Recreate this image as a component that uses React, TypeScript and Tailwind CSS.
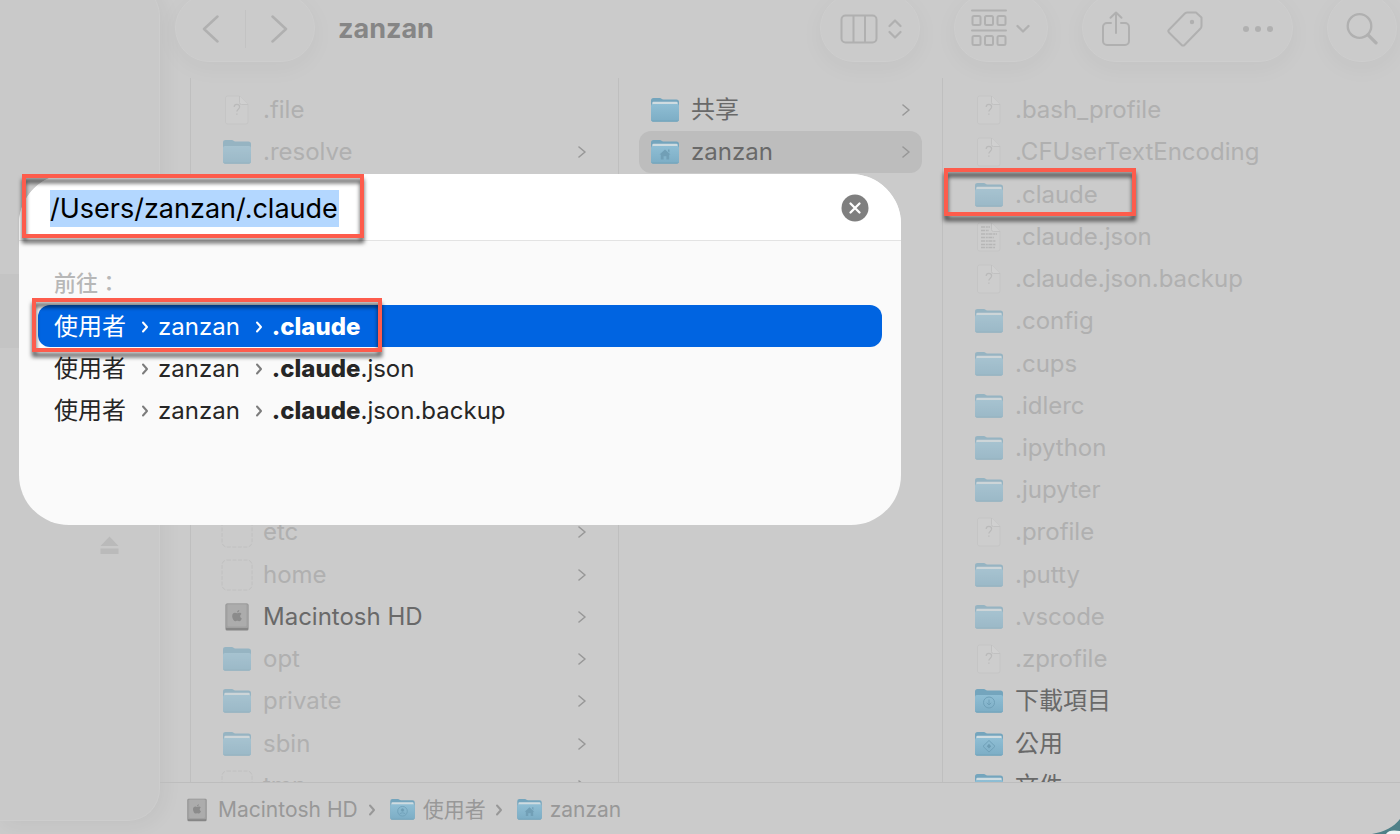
import { useState } from "react";
import clsx from "clsx";

type IconKind =
  | "folder"
  | "empty"
  | "home"
  | "users"
  | "download"
  | "public"
  | "documents"
  | "file"
  | "text"
  | "alias"
  | "disk";

type Entry = {
  name: string;
  icon: IconKind;
  strong?: boolean;
  arrow?: boolean;
  selected?: boolean;
  className?: string;
};

const rootEntries: Entry[] = [
  { name: ".file", icon: "file", className: "row-start-1" },
  { name: ".resolve", icon: "empty", arrow: true, className: "row-start-2" },
  { name: "etc", icon: "alias", arrow: true, className: "row-start-11" },
  { name: "home", icon: "alias", arrow: true, className: "row-start-12" },
  { name: "Macintosh HD", icon: "disk", arrow: true, strong: true, className: "row-start-13" },
  { name: "opt", icon: "empty", arrow: true, className: "row-start-14" },
  { name: "private", icon: "folder", arrow: true, className: "row-start-15" },
  { name: "sbin", icon: "folder", arrow: true, className: "row-start-16" },
  { name: "tmp", icon: "alias", arrow: true, className: "row-start-17" },
];

const userEntries: Entry[] = [
  { name: "共享", icon: "folder", arrow: true, strong: true },
  { name: "zanzan", icon: "home", arrow: true, strong: true, selected: true },
];

const homeEntries: Entry[] = [
  { name: ".bash_profile", icon: "file" },
  { name: ".CFUserTextEncoding", icon: "file" },
  { name: ".claude", icon: "folder" },
  { name: ".claude.json", icon: "text" },
  { name: ".claude.json.backup", icon: "file" },
  { name: ".config", icon: "folder" },
  { name: ".cups", icon: "folder" },
  { name: ".idlerc", icon: "folder" },
  { name: ".ipython", icon: "folder" },
  { name: ".jupyter", icon: "folder" },
  { name: ".profile", icon: "file" },
  { name: ".putty", icon: "folder" },
  { name: ".vscode", icon: "folder" },
  { name: ".zprofile", icon: "file" },
  { name: "下載項目", icon: "download", strong: true },
  { name: "公用", icon: "public", strong: true },
  { name: "文件", icon: "documents", strong: true },
];

const results = ["", ".json", ".json.backup"];

function FolderGlyph({ kind }: { kind: IconKind }) {
  const line = { fill: "none", stroke: "#6fa0b8", strokeWidth: 1 };
  if (kind === "home")
    return (
      <path
        d="M8.500 14.500 14 9.500l5.500 5h-1.300V19.500h-2.800v-3.200h-2.800v3.200H9.800v-5zM17 9.500h1.500v3L17 11.200z"
        fill="#719fb6"
      />
    );
  if (kind === "users")
    return (
      <g {...line}>
        <circle cx="14" cy="14" r="5.500" />
        <circle cx="14" cy="12.600" r="1.500" fill="#6d9cb3" />
        <path d="M10.800 17c1.600-1.600 4.800-1.600 6.400 0" />
      </g>
    );
  if (kind === "download")
    return (
      <g {...line}>
        <circle cx="14" cy="13.500" r="5.500" />
        <path d="M14 10.500V16m-2.200-2.200L14 16l2.200-2.200" />
      </g>
    );
  if (kind === "public")
    return (
      <g {...line}>
        <path d="m14 8.500 6 5.800-6 5.800-6-5.800z" />
        <path d="m14 11.800 2.200 2.400-2.200 2.400-2.200-2.400z" fill="#6d9cb3" stroke="none" />
      </g>
    );
  if (kind === "documents")
    return <path d="M10.500 9h5l2.500 2.500V20h-7.500z" {...line} />;
  return null;
}

function EntryIcon({ kind, small }: { kind: IconKind; small?: boolean }) {
  const size = small ? "h-[21px] w-[25px]" : "h-[24px] w-[28px]";
  if (kind === "disk")
    return (
      <svg viewBox="0 0 24 28" className={small ? "h-[24px] w-[20px]" : "h-[28px] w-[24px]"}>
        <rect x="0.500" y="0.500" width="23" height="27" rx="1.500" fill="#868686" />
        <rect x="1" y="1" width="22" height="24" rx="1" fill="#a0a0a0" />
        <rect x="2.500" y="1.500" width="19" height="22" rx="1" fill="#acacac" />
        <path
          d="M14.300 7c0 1.300-1 2.500-2.200 2.500C12 8.200 13 7.200 14.300 7zM12.200 10.300c.6 0 1.200-.5 2.200-.5.9 0 1.700.5 2.100 1.200-1.900 1.100-1.600 3.700.3 4.500-.5 1.300-1.400 2.800-2.400 2.800-.8 0-1.100-.5-2.100-.5s-1.300.5-2.100.5c-1.300 0-3-2.800-3-5.200 0-2.200 1.400-3.300 2.700-3.300.9 0 1.700.5 2.300.5z"
          fill="#8b8b8b"
        />
      </svg>
    );
  if (kind === "alias")
    return (
      <svg viewBox="0 0 32 32" className="h-[32px] w-[32px] flex-none">
        <rect
          x="1"
          y="1"
          width="30"
          height="30"
          rx="5"
          fill="none"
          stroke="#c0c0c0"
          strokeDasharray="4 1.500"
        />
      </svg>
    );
  if (kind === "file" || kind === "text")
    return (
      <svg viewBox="0 0 24 30" className="h-[30px] w-[24px]">
        <path
          d="M2.500 1h12L23 9.500V27a2 2 0 0 1-2 2H2.500a2 2 0 0 1-2-2V3a2 2 0 0 1 2-2z"
          fill="#cdcdcd"
          stroke="#c5c5c5"
        />
        <path d="M14.500 1v6.500a2 2 0 0 0 2 2H23" fill="#d0d0d0" stroke="#c1c1c1" />
        {kind === "file" ? (
          <path
            d="M9.200 12c0-3.400 5.400-3.400 5.400 0 0 2.200-2.700 2.300-2.700 4.600m0 2v1.200"
            fill="none"
            stroke="#bababa"
            strokeWidth="1.200"
          />
        ) : (
          <path
            d="M4 5h9M4 8.500h8M4 12h16M4 15.500h13M4 19h15M4 22.500h15M4 25.500h14"
            fill="none"
            stroke="#b6b6b6"
            strokeWidth="1.400"
            strokeDasharray="4 .8 2 .6"
          />
        )}
      </svg>
    );
  const paper = kind !== "empty" && kind !== "download";
  return (
    <svg viewBox="0 0 28 24" className={size}>
      <defs>
        <linearGradient id="folder-front" x1="0" y1="0" x2="0" y2="1">
          <stop offset="0" stopColor="#8fbed4" />
          <stop offset="1" stopColor="#7cadc5" />
        </linearGradient>
      </defs>
      <path
        d="M0 2.500A2.500 2.500 0 0 1 2.500 0h6.300c1.500 0 2 1.500 3.500 1.500h13.200A2.500 2.500 0 0 1 28 4v17.500a2 2 0 0 1-2 2H2a2 2 0 0 1-2-2z"
        fill="#74a5bd"
      />
      {paper && (
        <path d="M2.500 3.800h23a1.200 1.200 0 0 1 1.200 1.200V9H1.300V5a1.200 1.200 0 0 1 1.200-1.200z" fill="#cfdce1" />
      )}
      <path
        d="M0 8a2 2 0 0 1 2-2h24a2 2 0 0 1 2 2v13.500a2 2 0 0 1-2 2H2a2 2 0 0 1-2-2z"
        fill="url(#folder-front)"
      />
      <path d="M.5 22.500h27a1.800 1.800 0 0 1-1.500 1H2a1.800 1.800 0 0 1-1.500-1z" fill="#74a3ba" />
      <FolderGlyph kind={kind} />
    </svg>
  );
}

function Arrow({ className }: { className?: string }) {
  return (
    <svg viewBox="0 0 8 14" className={clsx("h-[14px] w-[8px] flex-none", className)}>
      <path
        d="m1 2 6 5-6 5"
        fill="none"
        stroke="currentColor"
        strokeWidth="1.600"
        strokeLinecap="round"
        strokeLinejoin="round"
      />
    </svg>
  );
}

function PathArrow({ className }: { className?: string }) {
  return (
    <svg viewBox="0 0 8 12" className={clsx("h-[12px] w-[8px] flex-none", className)}>
      <path
        d="m2 1.500 4 4.500-4 4.500"
        fill="none"
        stroke="currentColor"
        strokeWidth="2"
        strokeLinecap="round"
        strokeLinejoin="round"
      />
    </svg>
  );
}

function Column({ entries, className }: { entries: Entry[]; className: string }) {
  return (
    <div className={clsx("border-l border-[#bfbfbf] px-5 pt-[11px]", className)}>
      <ul className="grid h-[718px] grid-rows-[repeat(17,minmax(0,1fr))]">
        {entries.map((entry) => (
          <li key={entry.name} className={clsx("min-h-0", entry.className)}>
            <button
              type="button"
              className={clsx(
                "flex h-full w-full items-center gap-3 rounded-[12px] px-3 text-left",
                entry.selected && "bg-[#bdbdbd]"
              )}
            >
              <span
                className={clsx(
                  "flex w-7 flex-none justify-center",
                  !entry.strong &&
                    (entry.icon === "folder" || entry.icon === "empty") &&
                    "opacity-60"
                )}
              >
                <EntryIcon kind={entry.icon} />
              </span>
              <span
                className={clsx(
                  "flex-1 whitespace-nowrap",
                  entry.strong ? "text-[#696969]" : "text-[#b0b0b0]"
                )}
              >
                {entry.name}
              </span>
              {entry.arrow && <Arrow className="text-[#989898]" />}
            </button>
          </li>
        ))}
      </ul>
    </div>
  );
}

const pill =
  "flex h-[68px] flex-none items-center rounded-full border border-[#cecece] bg-[#cbcbcb] pt-px text-[#b0b0b0] shadow-[0_6px_24px_rgba(0,0,0,0.04)]";

function Toolbar() {
  return (
    <header className="-mt-[6px] flex h-[68px] flex-none items-center pl-[15px] pr-[3px]">
      <div className={clsx(pill, "w-[140px] justify-between px-[26px]")}>
        <button type="button" aria-label="Back">
          <svg viewBox="0 0 17 28" className="h-[28px] w-[17px]">
            <path d="M15.500 1.500 2 14l13.500 12.500" fill="none" stroke="currentColor" strokeWidth="2.500" strokeLinecap="round" strokeLinejoin="round" />
          </svg>
        </button>
        <span className="h-[38px] w-px bg-[#c3c3c3]" />
        <button type="button" aria-label="Forward">
          <svg viewBox="0 0 17 28" className="h-[28px] w-[17px]">
            <path d="M1.500 1.500 15 14 1.500 26.500" fill="none" stroke="currentColor" strokeWidth="2.500" strokeLinecap="round" strokeLinejoin="round" />
          </svg>
        </button>
      </div>
      <h1 className="ml-[23px] pt-px text-[27px] leading-8 font-bold text-[#868686]">zanzan</h1>
      <div className="ml-auto flex gap-[34px]">
        <button type="button" aria-label="View" className={clsx(pill, "w-[100px] gap-[10px] pl-[19px]")}>
          <svg viewBox="0 0 38 30" className="h-[30px] w-[38px]">
            <g fill="none" stroke="currentColor" strokeWidth="2">
              <rect x="1.500" y="1.500" width="35" height="27" rx="4" />
              <path d="M13.500 2v26M25 2v26" />
            </g>
          </svg>
          <svg viewBox="0 0 14 20" className="h-[20px] w-[14px]">
            <path d="m1.500 7 5.500-5.500L12.500 7M1.500 13l5.500 5.500 5.500-5.500" fill="none" stroke="currentColor" strokeWidth="2.200" strokeLinecap="round" strokeLinejoin="round" />
          </svg>
        </button>
        <button type="button" aria-label="Group" className={clsx(pill, "w-[94px] gap-[9px] pl-[16px]")}>
          <svg viewBox="0 0 36 39" className="h-[39px] w-[36px]">
            <g fill="none" stroke="currentColor" strokeWidth="2">
              <path d="M1 1.500h34M1 21.500h34" strokeLinecap="round" />
              <rect x="1.500" y="7" width="8" height="9" rx="1.500" />
              <rect x="14" y="7" width="8" height="9" rx="1.500" />
              <rect x="26.500" y="7" width="8" height="9" rx="1.500" />
              <rect x="1.500" y="27" width="8" height="9" rx="1.500" />
              <rect x="14" y="27" width="8" height="9" rx="1.500" />
              <rect x="26.500" y="27" width="8" height="9" rx="1.500" />
            </g>
          </svg>
          <svg viewBox="0 0 14 10" className="h-[10px] w-[14px]">
            <path d="M1.500 2 7 7.500 12.500 2" fill="none" stroke="currentColor" strokeWidth="2.300" strokeLinecap="round" strokeLinejoin="round" />
          </svg>
        </button>
        <div className={clsx(pill, "w-[211px] justify-between pl-[19px] pr-[16px]")}>
          <button type="button" aria-label="Share">
            <svg viewBox="0 0 28 36" className="h-[36px] w-[28px]">
              <path
                d="M9 12H5a4 4 0 0 0-4 4v14a4 4 0 0 0 4 4h18a4 4 0 0 0 4-4V16a4 4 0 0 0-4-4h-4M14 22V1.500M8.500 6.800 14 1.500l5.500 5.300"
                fill="none"
                stroke="currentColor"
                strokeWidth="2"
                strokeLinecap="round"
                strokeLinejoin="round"
              />
            </svg>
          </button>
          <button type="button" aria-label="Tags">
            <svg viewBox="0 0 36 36" className="h-[36px] w-[36px]">
              <path
                d="M20.500 1.500h8.500l5.500 5v8.500a4 4 0 0 1-1.200 2.800L17.500 34a2 2 0 0 1-2.900 0L2 21.500a2 2 0 0 1 0-2.800L17.800 2.500a4 4 0 0 1 2.700-1z"
                fill="none"
                stroke="currentColor"
                strokeWidth="2"
                strokeLinejoin="round"
              />
              <circle cx="25" cy="11" r="2.200" fill="currentColor" />
            </svg>
          </button>
          <button type="button" aria-label="More">
            <svg viewBox="0 0 36 8" className="h-[8px] w-[36px]">
              <g fill="currentColor">
                <circle cx="6" cy="4" r="3" />
                <circle cx="18" cy="4" r="3" />
                <circle cx="30" cy="4" r="3" />
              </g>
            </svg>
          </button>
        </div>
        <button type="button" aria-label="Search" className={clsx(pill, "w-[70px] justify-center")}>
          <svg viewBox="0 0 32 32" className="h-[32px] w-[32px]">
            <circle cx="13.500" cy="13" r="11.800" fill="none" stroke="currentColor" strokeWidth="2.300" />
            <path d="m22 21.800 8 8" stroke="currentColor" strokeWidth="3.300" strokeLinecap="round" />
          </svg>
        </button>
      </div>
    </header>
  );
}

function PathBar() {
  return (
    <nav className="flex h-[52px] flex-none items-center border-t border-[#bdbdbd] pl-[27px] pt-[2px] text-[21px] leading-7 text-[#989898]">
      <a href="#disk" className="flex items-center gap-[11px]">
        <EntryIcon kind="disk" small />
        Macintosh HD
      </a>
      <PathArrow className="ml-[10px] mr-[14px]" />
      <a href="#users" className="flex items-center gap-[8px]">
        <EntryIcon kind="users" small />
        使用者
      </a>
      <PathArrow className="ml-[9px] mr-[14px]" />
      <a href="#home" className="flex items-center gap-[8px]">
        <EntryIcon kind="home" small />
        zanzan
      </a>
    </nav>
  );
}

function GoToSheet() {
  const [path, setPath] = useState("/Users/zanzan/.claude");
  return (
    <section className="absolute left-[19px] top-[174px] h-[351px] w-[882px] overflow-hidden rounded-[50px] bg-[#fafafa]">
      <div className="flex h-[67px] items-center justify-between border-b border-[#e3e3e3] bg-white pl-[31px] pr-8 pt-[2px]">
        <input
          type="text"
          aria-label="Path"
          value={path}
          onChange={(e) => setPath(e.target.value)}
          className="h-[37px] w-[289px] bg-[#b3d7ff] text-[27px] text-black outline-none"
        />
        <button type="button" aria-label="Clear" onClick={() => setPath("")}>
          <svg viewBox="0 0 28 28" className="h-[28px] w-[28px]">
            <circle cx="14" cy="14" r="13.500" fill="#7f7f7f" />
            <path d="m9.500 9.500 9 9M18.500 9.500l-9 9" stroke="#fff" strokeWidth="2.300" strokeLinecap="round" />
          </svg>
        </button>
      </div>
      <div className="px-[19px] pt-[26px]">
        <h2 className="mb-[6px] pl-4 text-[22px] leading-8 font-medium text-[#b7b7b7]">前往：</h2>
        <ul>
          {results.map((suffix, i) => (
            <li key={suffix}>
              <button
                type="button"
                className={clsx(
                  "flex h-[42px] w-full items-center rounded-[12px] pl-4 pt-px text-left",
                  i === 0 ? "bg-[#0064e1] text-white" : "text-[#262626]"
                )}
              >
                使用者
                <PathArrow className={clsx("ml-[15px] mr-[9px]", i > 0 && "text-[#7c7c7c]")} />
                zanzan
                <PathArrow className={clsx("ml-[15px] mr-[9px]", i > 0 && "text-[#7c7c7c]")} />
                <span>
                  <b className="font-extrabold">.claude</b>
                  {suffix}
                </span>
              </button>
            </li>
          ))}
        </ul>
      </div>
    </section>
  );
}

function Highlight({ className }: { className: string }) {
  return (
    <div
      className={clsx(
        "pointer-events-none absolute border-4 border-[#fd5c4c] drop-shadow-[0_5px_2px_rgba(0,0,0,0.65)]",
        className
      )}
    />
  );
}

export default function App() {
  return (
    <div className="relative flex h-screen overflow-hidden bg-[#cbcbcb] font-[Inter,'Noto_Sans_CJK_TC',sans-serif] text-[24px] leading-8">
      <aside className="-mt-4 mb-[13px] w-40 flex-none rounded-r-[32px] border-r border-b border-[#cdcdcd] bg-[#c9c9c9] shadow-[4px_4px_20px_rgba(0,0,0,0.05)]">
        <div className="mt-[290px] h-[74px] bg-[#c4c4c4]" />
        <button type="button" aria-label="Eject" className="mt-[188px] ml-[100px] block">
          <svg viewBox="0 0 19 18" className="h-[18px] w-[19px] text-[#bababa]">
            <path d="M9.500.500 18.500 10H.5zM.5 12.500h18V18H.5z" fill="currentColor" />
          </svg>
        </button>
      </aside>
      <main className="flex min-w-0 flex-1 flex-col">
        <Toolbar />
        <div className="mt-4 flex min-h-0 flex-1 overflow-hidden pl-[30px]">
          <Column entries={rootEntries} className="w-[428px] flex-none" />
          <Column entries={userEntries} className="w-[324px] flex-none" />
          <Column entries={homeEntries} className="min-w-0 flex-1" />
        </div>
        <PathBar />
      </main>
      <GoToSheet />
      <Highlight className="left-[22px] top-[174px] h-[64px] w-[342px]" />
      <Highlight className="left-[32px] top-[298px] h-[54px] w-[350px]" />
      <Highlight className="left-[944px] top-[168px] h-[48px] w-[192px]" />
      <svg viewBox="0 0 28 16" className="absolute right-0 bottom-0 h-[16px] w-[28px]">
        <path d="M0 16C12 14 22 9 28 1v15z" fill="#4f8088" />
        <path d="M14 16c2-4 8-4 14-3v3z" fill="#f2f5f5" />
      </svg>
    </div>
  );
}
